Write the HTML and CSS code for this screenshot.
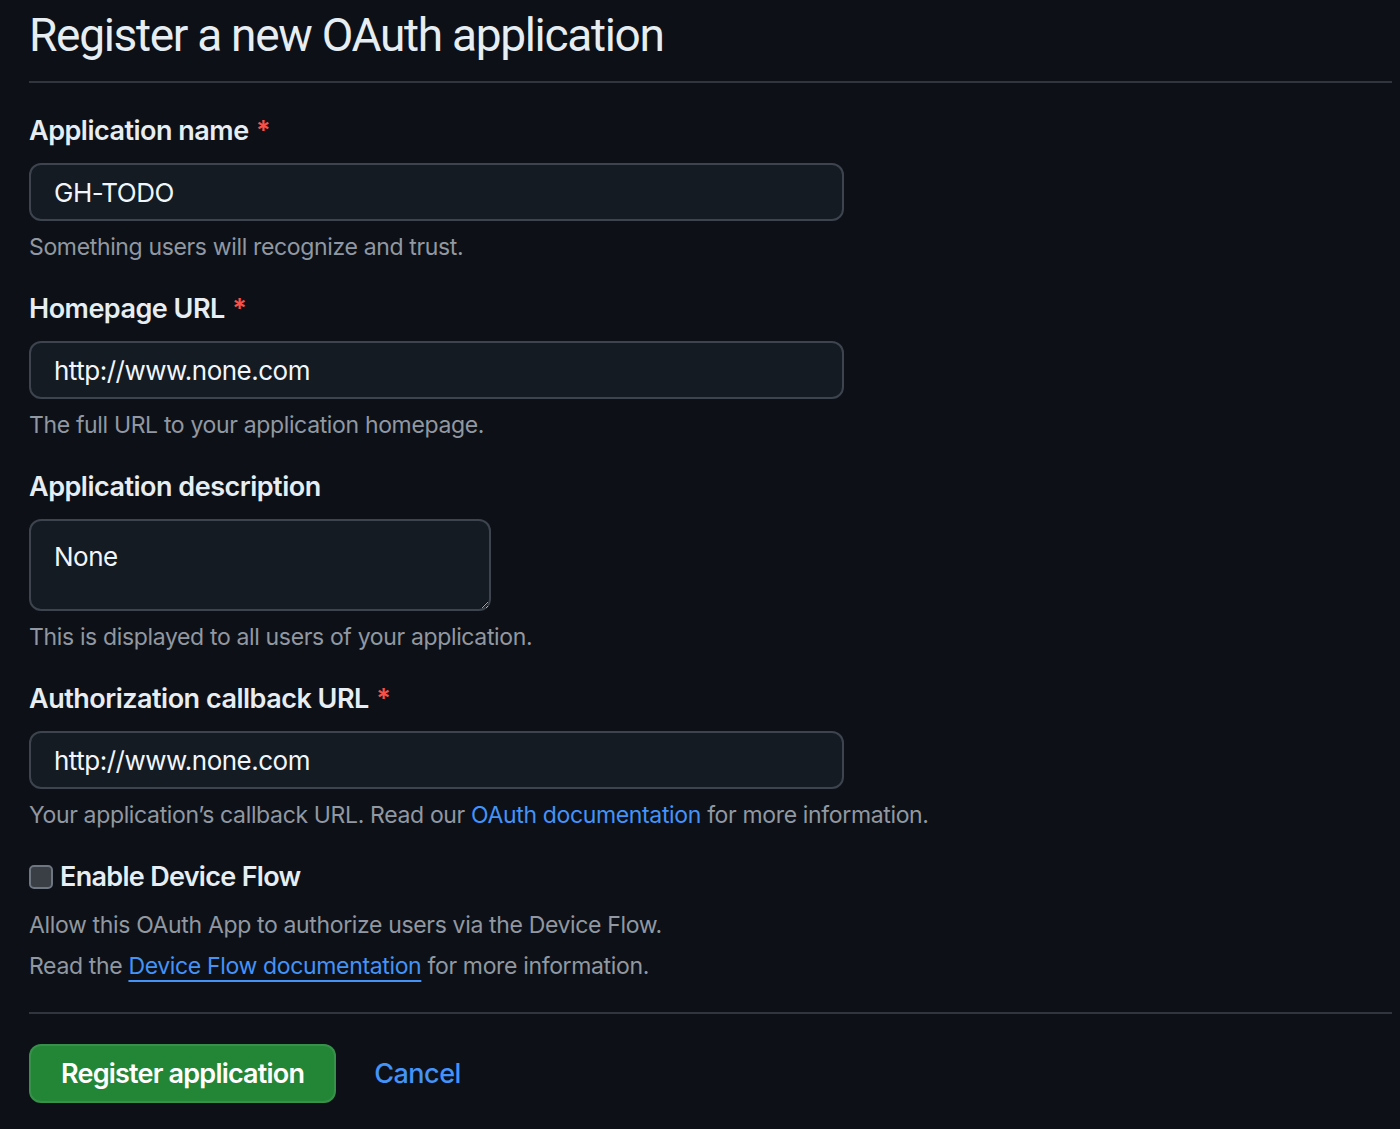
FILE: index.html
```html
<!DOCTYPE html>
<html lang="en">
  <head>
    <meta charset="UTF-8" />
    <title>Register a new OAuth application</title>
    <link rel="stylesheet" href="styles.css">
  </head>
  <body>
    <div class="page">
      <h2 class="subhead">Register a new OAuth application</h2>

      <form class="form">
        <div class="group">
          <label class="label" for="app-name">Application name <span class="req">*</span></label>
          <input class="input" id="app-name" type="text" value="GH-TODO" />
          <p class="note">Something users will recognize and trust.</p>
        </div>

        <div class="group">
          <label class="label" for="homepage">Homepage URL <span class="req">*</span></label>
          <input class="input" id="homepage" type="text" value="http://www.none.com" />
          <p class="note">The full URL to your application homepage.</p>
        </div>

        <div class="group">
          <label class="label" for="desc">Application description</label>
          <textarea class="input textarea" id="desc">None</textarea>
          <p class="note">This is displayed to all users of your application.</p>
        </div>

        <div class="group">
          <label class="label" for="callback">Authorization callback URL <span class="req">*</span></label>
          <input class="input" id="callback" type="text" value="http://www.none.com" />
          <p class="note">Your application’s callback URL. Read our <a class="link" href="#">OAuth documentation</a> for more information.</p>
        </div>

        <div class="check-group">
          <label class="check-label"><input class="checkbox" type="checkbox" /> Enable Device Flow</label>
          <p class="note note-first">Allow this OAuth App to authorize users via the Device Flow.</p>
          <p class="note note-next">Read the <a class="link underline" href="#">Device Flow documentation</a> for more information.</p>
        </div>

        <div class="actions">
          <button class="btn" type="button">Register application</button>
          <a class="link cancel" href="#">Cancel</a>
        </div>
      </form>
    </div>
  </body>
</html>
```

FILE: styles.css
```css
* {
  padding: 0;
  margin: 0;
  box-sizing: border-box;
}
body {
  font-family: "Inter", "Liberation Sans", sans-serif;
  background: #0d1117;
  color: #e6edf3;
  color-scheme: dark;
}
.page {
  padding: 5px 8px 0 29px;
}
.subhead {
  font-family: "Roboto", "Inter", sans-serif;
  font-size: 46px;
  font-weight: 400;
  line-height: 60px;
  letter-spacing: -1.3px;
  padding-bottom: 16px;
  border-bottom: 2px solid #30363d;
  margin-bottom: 28px;
}
.group {
  margin-bottom: 24px;
}
.label {
  display: block;
  font-size: 27px;
  font-weight: 600;
  line-height: 40px;
  letter-spacing: -0.5px;
  margin-bottom: 12px;
}
.req {
  color: #f85149;
  margin-left: 1px;
}
.input {
  display: block;
  width: 815px;
  height: 58px;
  padding: 0 23px;
  font-family: inherit;
  font-size: 26px;
  letter-spacing: -0.5px;
  color: #f0f6fc;
  background: #151b23;
  border: 2px solid #3d444d;
  border-radius: 12px;
  outline: none;
}
.textarea {
  width: 462px;
  height: 92px;
  padding: 16px 23px;
  line-height: 40px;
  resize: vertical;
}
.note {
  font-size: 23px;
  line-height: 36px;
  letter-spacing: -0.35px;
  color: #9198a1;
  margin-top: 8px;
}
.link {
  color: #4493f8;
  text-decoration: none;
}
.underline {
  text-decoration: underline;
  text-underline-offset: 6px;
  text-decoration-thickness: 2px;
}
.check-group {
  padding-bottom: 28px;
  border-bottom: 2px solid #30363d;
}
.check-label {
  display: flex;
  align-items: center;
  gap: 7px;
  font-size: 27px;
  font-weight: 600;
  line-height: 40px;
  letter-spacing: -0.7px;
}
.checkbox {
  appearance: none;
  width: 24px;
  height: 24px;
  border: 2px solid #6e7681;
  border-radius: 5px;
  background: #3a3f46;
}
.note-first {
  margin-top: 10px;
}
.note-next {
  margin-top: 5px;
}
.actions {
  display: flex;
  align-items: center;
  gap: 38px;
  padding-top: 30px;
}
.btn {
  height: 59px;
  padding: 0 30px;
  font-family: inherit;
  font-size: 27px;
  font-weight: 600;
  letter-spacing: -0.8px;
  color: #fff;
  background: #238636;
  border: 2px solid rgba(240, 246, 252, 0.1);
  border-radius: 12px;
}
.cancel {
  font-size: 27px;
  font-weight: 500;
  letter-spacing: -0.5px;
}
```
